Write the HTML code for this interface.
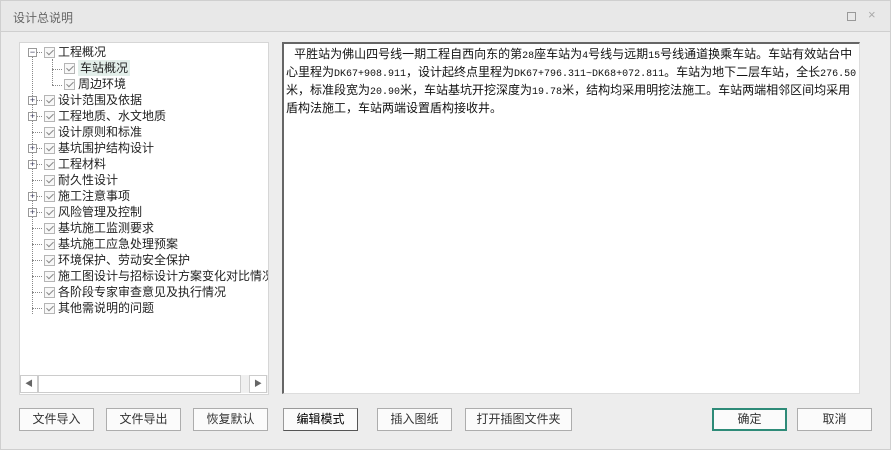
<!DOCTYPE html>
<html><head><meta charset="utf-8"><style>
*{margin:0;padding:0;box-sizing:border-box}
body{width:891px;height:450px;background:#f2f2f2;font-family:"Liberation Sans","Noto Sans CJK SC","WenQuanYi Zen Hei",sans-serif;font-size:12px;color:#000;position:relative;overflow:hidden}
.title{position:absolute;left:0;top:0;width:891px;height:31px;background:#e8e8e8;border:1px solid #cfcfcf;border-bottom:none}
.title span{position:absolute;left:12px;top:8px;font-size:12px;color:#666}
.body{position:absolute;left:0;top:31px;width:891px;height:419px;background:#ededed;border:1px solid #cfcfcf}
.tree{position:absolute;left:19px;top:42px;width:250px;height:353px;background:#fff;border:1px solid #d6d6d6}
.row{position:absolute;height:16px;line-height:16px;white-space:nowrap;color:#222}
.cb{position:absolute;width:11px;height:11px;border:1px solid #b5b5b5;background:#f8f8f8}
.cb:after{content:"";position:absolute;left:3px;top:0px;width:3px;height:6px;border:solid #888;border-width:0 1.5px 1.5px 0;transform:rotate(45deg)}
.ex{position:absolute;width:9px;height:9px;border:1px solid #999;background:#fff;font-size:9px;line-height:7px;text-align:center;color:#335}
.dv{position:absolute;border-left:1px dotted #888}
.dh{position:absolute;border-top:1px dotted #888}
.sb{position:absolute;left:20px;top:375px;width:248px;height:18px;background:#f0f0f0}
.txt{position:absolute;left:282px;top:42px;width:578px;height:352px;background:#fff;border:1px solid #ddd;border-top:2px solid #666;border-left:2px solid #666}
.txt div{position:absolute;left:2px;width:574px;height:18px;font-family:"Noto Sans CJK SC","WenQuanYi Zen Hei",sans-serif;font-size:12px;line-height:18px;color:#111;white-space:nowrap;overflow:hidden}
.m{font-family:"Liberation Mono",monospace;font-size:10px}
.btn{position:absolute;top:408px;height:23px;width:75px;background:#fbfbfb;border:1px solid #adadad;text-align:center;line-height:21px;font-size:12px;color:#333}
</style></head><body>
<div class="title"><span>设计总说明</span>
<div style="position:absolute;left:846px;top:11px;width:9px;height:9px;border:1px solid #999"></div>
<div style="position:absolute;left:867px;top:6px;color:#aaa;font-size:13px">×</div></div>
<div class="body"></div>
<div class="tree">
<div class="dv" style="left:12px;top:14px;height:257px"></div>
<div class="dv" style="left:32px;top:16px;height:26px"></div>
<div class="dh" style="left:32px;top:26px;width:10px"></div>
<div class="dh" style="left:32px;top:42px;width:10px"></div>
</div>
<div id="t"></div>
<div class="sb"><div style="position:absolute;left:0;top:0;width:18px;height:18px;border:1px solid #ccc;background:#fff;color:#666;font-size:8px;line-height:16px;text-align:center">◀</div>
<div style="position:absolute;left:18px;top:0;width:203px;height:18px;border:1px solid #ccc;background:#fff"></div>
<div style="position:absolute;left:229px;top:0;width:18px;height:18px;border:1px solid #ccc;background:#fff;color:#666;font-size:8px;line-height:16px;text-align:center">▶</div></div>
<div class="txt">
<div style="top:1px">&nbsp;&nbsp;&nbsp;平胜站为佛山四号线一期工程自西向东的第<span class="m">28</span>座车站为<span class="m">4</span>号线与远期<span class="m">15</span>号线通道换乘车站。车站有效站台中</div>
<div style="top:19px">心里程为<span class="m">DK67+908.911</span>，设计起终点里程为<span class="m">DK67+796.311~DK68+072.811</span>。车站为地下二层车站，全长<span class="m">276.50</span></div>
<div style="top:37px">米，标准段宽为<span class="m">20.90</span>米，车站基坑开挖深度为<span class="m">19.78</span>米，结构均采用明挖法施工。车站两端相邻区间均采用</div>
<div style="top:55px">盾构法施工，车站两端设置盾构接收井。</div>
</div>
<div class="btn" style="left:19px">文件导入</div>
<div class="btn" style="left:106px">文件导出</div>
<div class="btn" style="left:193px">恢复默认</div>
<div class="btn" style="left:283px;border-color:#999 #555 #555 #999;color:#000">编辑模式</div>
<div class="btn" style="left:377px">插入图纸</div>
<div class="btn" style="left:465px;width:107px">打开插图文件夹</div>
<div class="btn" style="left:712px;border:2px solid #2e8b78;line-height:19px">确定</div>
<div class="btn" style="left:797px">取消</div>
<script>
var items=[["工程概况",0,"-"],["车站概况",1,""],["周边环境",1,""],["设计范围及依据",0,"+"],["工程地质、水文地质",0,"+"],["设计原则和标准",0,""],["基坑围护结构设计",0,"+"],["工程材料",0,"+"],["耐久性设计",0,""],["施工注意事项",0,"+"],["风险管理及控制",0,"+"],["基坑施工监测要求",0,""],["基坑施工应急处理预案",0,""],["环境保护、劳动安全保护",0,""],["施工图设计与招标设计方案变化对比情况",0,""],["各阶段专家审查意见及执行情况",0,""],["其他需说明的问题",0,""]];
var h="";
items.forEach(function(it,i){var y=44+16*i;var cx=it[1]?64:44;
if(!it[1]){h+='<div class="dh" style="left:32px;top:'+(y+8)+'px;width:10px"></div>';}
if(it[2])h+='<div class="ex" style="left:28px;top:'+(y+4)+'px">'+(it[2]=="-"?"−":"+")+'</div>';
h+='<div class="cb" style="left:'+cx+'px;top:'+(y+3)+'px"></div>';
h+='<div class="row" style="left:'+(cx+14)+'px;top:'+y+'px;'+(i==1?'background:#e3efea;padding:0 2px;':'')+'max-width:'+(268-cx-14)+'px;overflow:hidden">'+it[0]+'</div>';});
document.getElementById("t").innerHTML=h;
</script>
</body></html>
